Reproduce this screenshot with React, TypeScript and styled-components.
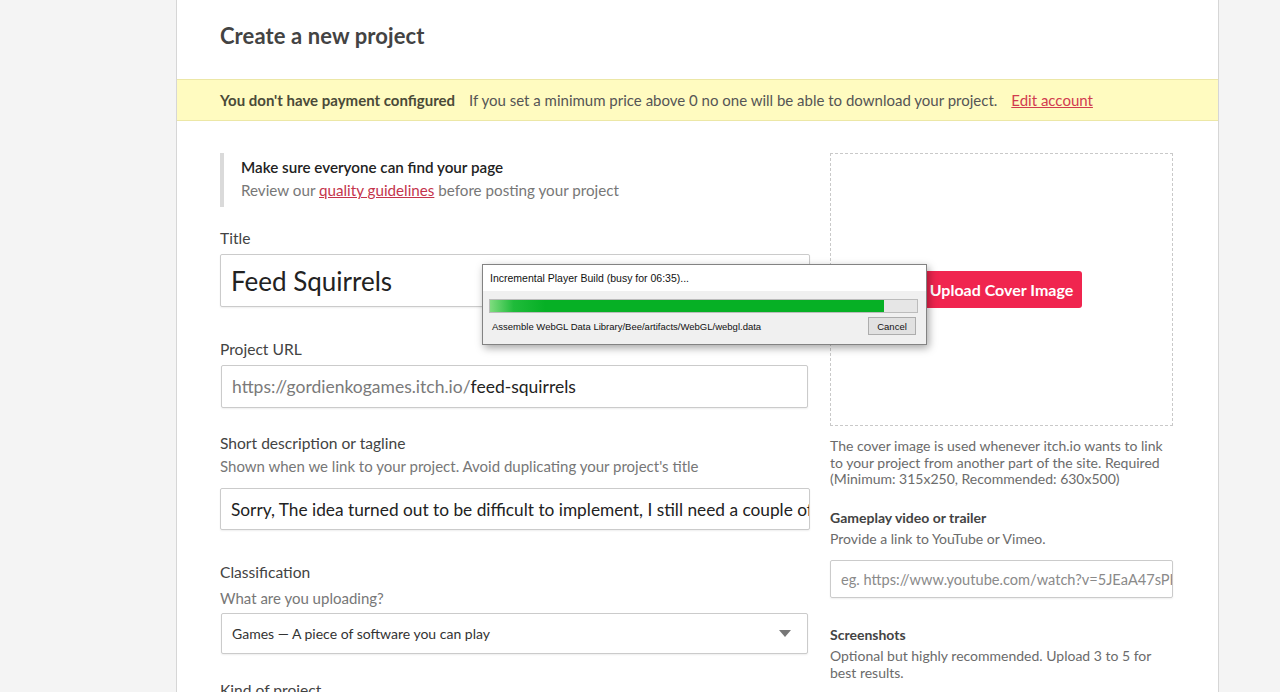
import React from 'react';
import styled, { createGlobalStyle } from 'styled-components';

const GlobalStyle = createGlobalStyle`
  html, body {
    margin: 0;
    padding: 0;
    background: #f4f4f4;
    font-family: Lato, 'Noto Sans', sans-serif;
    overflow: hidden;
  }
`;

const Page = styled.div`
  position: relative;
  height: 692px;
  overflow: hidden;
`;

const Panel = styled.div`
  margin-left: 176px;
  width: 1041px;
  min-height: 692px;
  background: #fff;
  border-left: 1px solid #d6d6d6;
  border-right: 1px solid #d6d6d6;
`;

const Header = styled.div`
  height: 79px;
  padding: 0 43px 8px;
  display: flex;
  align-items: center;
  box-sizing: border-box;
`;

const PageTitle = styled.h2`
  margin: 0;
  font-size: 22px;
  font-weight: 700;
  color: #434343;
  letter-spacing: 0.1px;
`;

const Banner = styled.div`
  height: 42px;
  box-sizing: border-box;
  background: #fffbc0;
  border-top: 1px solid #ece7a6;
  border-bottom: 1px solid #ece7a6;
  display: flex;
  align-items: center;
  padding: 0 43px;
  font-size: 15px;
  color: #555;
`;

const BannerStrong = styled.span`
  font-weight: 700;
  color: #4a4a38;
  margin-right: 14px;
`;

const BannerLink = styled.a`
  margin-left: 14px;
  color: #d13b4f;
  text-decoration: underline;
`;

const Columns = styled.div`
  display: flex;
  gap: 20px;
  padding: 32px 43px 0;
`;

const LeftCol = styled.div`
  width: 590px;
`;

const RightCol = styled.div`
  width: 343px;
`;

const Callout = styled.div`
  border-left: 4px solid #dadada;
  padding: 3px 0 5px 17px;
  margin-bottom: 21px;
`;

const CalloutTitle = styled.div`
  font-size: 15.2px;
  line-height: 23px;
  font-weight: 600;
  color: #222;
`;

const CalloutText = styled.div`
  font-size: 15.2px;
  line-height: 23px;
  color: #777;
`;

const RedLink = styled.a`
  color: #c4344c;
  text-decoration: underline;
`;

const Field = styled.div<{ $gap?: number }>`
  margin-bottom: ${({ $gap }) => $gap ?? 30}px;
`;

const Label = styled.div`
  font-size: 15.6px;
  line-height: 20px;
  color: #434343;
  margin-bottom: 6px;
`;

const Sub = styled.div<{ $mt?: number; $mb?: number }>`
  font-size: 15px;
  line-height: 20px;
  color: #777;
  margin-top: ${({ $mt }) => $mt ?? -3}px;
  margin-bottom: ${({ $mb }) => $mb ?? 6}px;
`;

const InputBox = styled.div<{ $h: number; $size: number; $w?: number }>`
  box-sizing: border-box;
  height: ${({ $h }) => $h}px;
  width: ${({ $w }) => ($w ? `${$w}px` : '100%')};
  margin-left: ${({ $w }) => ($w ? '1px' : '0')};
  border: 1px solid #cbcbcb;
  border-radius: 2px;
  box-shadow: 0 1px 2px rgba(0, 0, 0, 0.07);
  display: flex;
  align-items: center;
  padding: 0 10px;
  font-size: ${({ $size }) => $size}px;
  color: #222;
  white-space: nowrap;
  overflow: hidden;
  background: #fff;
`;

const Muted = styled.span`
  color: #7a7a7a;
`;

const SelectText = styled.span`
  flex: 1;
  font-size: 14px;
  color: #333;
`;

const Caret = styled.span`
  width: 0;
  height: 0;
  border-left: 6px solid transparent;
  border-right: 6px solid transparent;
  border-top: 7px solid #777;
  margin-right: 6px;
`;

const CoverBox = styled.div`
  height: 273px;
  box-sizing: border-box;
  border: 1px dashed #c9c9c9;
  display: flex;
  align-items: center;
  justify-content: center;
`;

const UploadButton = styled.button`
  height: 37px;
  padding: 0 9px;
  border: none;
  border-radius: 3px;
  background: #f0254f;
  color: #fff;
  font-family: Lato, sans-serif;
  font-size: 16px;
  font-weight: 700;
`;

const Help = styled.div`
  font-size: 14px;
  line-height: 16.5px;
  color: #6b6b6b;
`;

const SmallLabel = styled.div`
  font-size: 14px;
  line-height: 20px;
  font-weight: 700;
  color: #434343;
  margin-bottom: 3px;
`;

const SideField = styled.div<{ $mt: number }>`
  margin-top: ${({ $mt }) => $mt}px;
`;

const VideoInput = styled.div`
  box-sizing: border-box;
  height: 38px;
  margin-top: 13px;
  border: 1px solid #cbcbcb;
  border-radius: 2px;
  box-shadow: 0 1px 2px rgba(0, 0, 0, 0.07);
  display: flex;
  align-items: center;
  padding: 0 10px;
  font-size: 14.6px;
  color: #8a8a8a;
  white-space: nowrap;
  overflow: hidden;
`;

/* Windows-style build progress popup on top of the page */
const BuildDialog = styled.div`
  position: absolute;
  left: 482px;
  top: 264px;
  width: 445px;
  height: 81px;
  box-sizing: border-box;
  border: 1px solid #838383;
  background: #f0f0f0;
  box-shadow: 2px 3px 8px rgba(0, 0, 0, 0.35);
  font-family: 'Liberation Sans', Arial, sans-serif;
  color: #111;
`;

const DialogHead = styled.div`
  height: 26px;
  background: #fff;
  display: flex;
  align-items: center;
  padding-left: 7px;
  font-size: 10.5px;
`;

const Bar = styled.div`
  margin: 8px 8px 0 6px;
  height: 14px;
  box-sizing: border-box;
  border: 1px solid #bcbcbc;
  background: #e6e6e6;
`;

const BarFill = styled.div`
  height: 100%;
  background: linear-gradient(90deg, #7fdc7f 0%, #1fbb3a 6%, #06b025 14%, #06b025 100%);
`;

const DialogFoot = styled.div`
  display: flex;
  align-items: center;
  justify-content: space-between;
  padding: 4px 10px 0 9px;
  font-size: 9.5px;
`;

const CancelButton = styled.div`
  width: 48px;
  height: 18px;
  box-sizing: border-box;
  border: 1px solid #adadad;
  background: #e1e1e1;
  display: flex;
  align-items: center;
  justify-content: center;
  font-size: 9.5px;
`;

export default function App() {
  const progress = 92.3;
  return (
    <Page>
      <GlobalStyle />
      <Panel>
        <Header>
          <PageTitle>Create a new project</PageTitle>
        </Header>
        <Banner>
          <BannerStrong>You don't have payment configured</BannerStrong>
          If you set a minimum price above 0 no one will be able to download your project.
          <BannerLink>Edit account</BannerLink>
        </Banner>
        <Columns>
          <LeftCol>
            <Callout>
              <CalloutTitle>Make sure everyone can find your page</CalloutTitle>
              <CalloutText>
                Review our <RedLink>quality guidelines</RedLink> before posting your project
              </CalloutText>
            </Callout>
            <Field $gap={32}>
              <Label>Title</Label>
              <InputBox $h={53} $size={26}>Feed Squirrels</InputBox>
            </Field>
            <Field $gap={25}>
              <Label>Project URL</Label>
              <InputBox $h={43} $size={17.5} $w={587}>
                <Muted>https://gordienkogames.itch.io/</Muted>feed-squirrels
              </InputBox>
            </Field>
            <Field $gap={32}>
              <Label>Short description or tagline</Label>
              <Sub $mb={12}>Shown when we link to your project. Avoid duplicating your project's title</Sub>
              <InputBox $h={42} $size={17.3}>
                Sorry, The idea turned out to be difficult to implement, I still need a couple of days
              </InputBox>
            </Field>
            <Field $gap={26}>
              <Label>Classification</Label>
              <Sub $mt={0} $mb={5}>What are you uploading?</Sub>
              <InputBox $h={41} $size={15} $w={587}>
                <SelectText>Games — A piece of software you can play</SelectText>
                <Caret />
              </InputBox>
            </Field>
            <Label>Kind of project</Label>
          </LeftCol>
          <RightCol>
            <CoverBox>
              <UploadButton>Upload Cover Image</UploadButton>
            </CoverBox>
            <SideField $mt={12}>
              <Help>
                The cover image is used whenever itch.io wants to link to your project from another
                part of the site. Required (Minimum: 315x250, Recommended: 630x500)
              </Help>
            </SideField>
            <SideField $mt={20}>
              <SmallLabel>Gameplay video or trailer</SmallLabel>
              <Help>Provide a link to YouTube or Vimeo.</Help>
              <VideoInput>eg. https://www.youtube.com/watch?v=5JEaA47sPHQ</VideoInput>
            </SideField>
            <SideField $mt={27}>
              <SmallLabel>Screenshots</SmallLabel>
              <Help>Optional but highly recommended. Upload 3 to 5 for best results.</Help>
            </SideField>
          </RightCol>
        </Columns>
      </Panel>
      <BuildDialog>
        <DialogHead>Incremental Player Build (busy for 06:35)...</DialogHead>
        <Bar>
          <BarFill style={{ width: `${progress}%` }} />
        </Bar>
        <DialogFoot>
          <span>Assemble WebGL Data Library/Bee/artifacts/WebGL/webgl.data</span>
          <CancelButton>Cancel</CancelButton>
        </DialogFoot>
      </BuildDialog>
    </Page>
  );
}
